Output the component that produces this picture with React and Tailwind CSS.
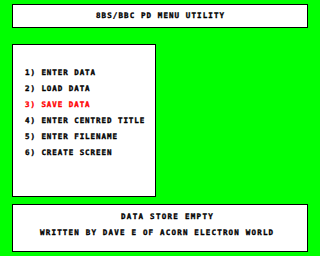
export default function App() {
  const font = { fontFamily: '"DejaVu Sans Mono", "Liberation Mono", monospace' };
  const items = [
    ["1) ENTER DATA", "text-black"],
    ["2) LOAD DATA", "text-black"],
    ["3) SAVE DATA", "text-[#ff0000]"],
    ["4) ENTER CENTRED TITLE", "text-black"],
    ["5) ENTER FILENAME", "text-black"],
    ["6) CREATE SCREEN", "text-black"],
  ];
  return (
    <div
      className="w-[320px] h-[256px] bg-[#00ff00] pt-[4px] px-[12px] flex flex-col font-bold text-[7.5px] leading-[8px] text-black whitespace-pre [-webkit-text-stroke:0.35px_currentColor]"
      style={font}
    >
      <div className="h-[24px] border border-black bg-white pl-[83px] pt-[7px] tracking-[1.1px]">
        <div className="h-[8px]">8BS/BBC PD MENU UTILITY</div>
      </div>
      <div className="mt-[16px] w-[144px] h-[153px] border border-black bg-white pl-[12px] pt-[24px] flex flex-col gap-[8px] tracking-[0.95px]">
        {items.map(([t, c]) => (
          <div key={t} className={`h-[8px] ${c}`}>{t}</div>
        ))}
      </div>
      <div className="mt-[7px] h-[48px] border border-black bg-white pt-[8px] flex flex-col gap-[8px] tracking-[1.2px]">
        <div className="h-[8px] pl-[108px] tracking-[1.3px]">DATA STORE EMPTY</div>
        <div className="h-[8px] pl-[27px]">WRITTEN BY DAVE E OF ACORN ELECTRON WORLD</div>
      </div>
    </div>
  );
}
